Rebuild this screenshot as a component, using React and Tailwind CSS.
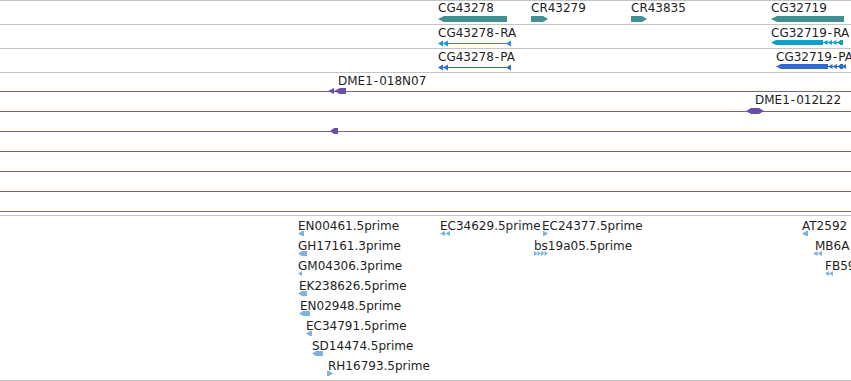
import React from 'react';

const TEAL = '#418f91';
const CYAN = '#129fc1';
const BLUE = '#3468cc';
const PURPLE = '#6b4ea6';
const EST = '#7fb3dd';

// left-pointing block
const leftBlock = (w, h, tip, color) => (
  <polygon points={`0,${h / 2} ${tip},0 ${w},0 ${w},${h} ${tip},${h}`} fill={color} />
);
// right-pointing block
const rightBlock = (w, h, tip, color) => (
  <polygon points={`0,0 ${w - tip},0 ${w},${h / 2} ${w - tip},${h} 0,${h}`} fill={color} />
);
// row of small chevrons
const chevrons = (x0, n, step, h, dir, color) =>
  Array.from({ length: n }).map((_, i) => {
    const x = x0 + i * step;
    const pts =
      dir === 'left'
        ? `${x},${h / 2} ${x + step},0 ${x + step},${h}`
        : `${x},0 ${x + step},${h / 2} ${x},${h}`;
    return <polygon key={i} points={pts} fill={color} />;
  });

// features sit on the browser canvas at their genomic pixel position
const Glyph = ({ x, y, w, h, children }) => (
  <svg
    className="absolute overflow-visible"
    style={{ left: x, top: y }}
    width={w}
    height={h}
    viewBox={`0 0 ${w} ${h}`}
  >
    {children}
  </svg>
);

// names with a dash get a little air round it, like the canvas font
const Label = ({ x, y, children }) => {
  const parts = typeof children === 'string' ? children.split('-') : [children];
  return (
    <div
      className="absolute whitespace-nowrap text-[12px] leading-[14px] text-[#1e1e1e]"
      style={{ left: x, top: y }}
    >
      {parts.map((p, i) => (
        <React.Fragment key={i}>
          {i > 0 && <span className="px-[1px]">-</span>}
          {p}
        </React.Fragment>
      ))}
    </div>
  );
};

const transcript = (w, color) => (
  <g>
    <line x1="4" y1="3.5" x2={w - 2} y2="3.5" stroke={color} strokeWidth="1" />
    <polygon points="0,3.5 5,0.5 5,6.5" fill={color} />
    <polygon points="5,3.5 10,0.5 10,6.5" fill={color} />
    <polygon points={`${w - 5},3.5 ${w},0.5 ${w},6.5`} fill={color} />
  </g>
);

const bigTranscript = (w, color) => (
  <g>
    {leftBlock(52, 5, 5, color)}
    <line x1="50" y1="2.5" x2={w} y2="2.5" stroke={color} strokeWidth="1" />
    {chevrons(52, 4, 4.5, 5, 'left', color)}
    <rect x={w - 3} y="0" width="3" height="5" fill={color} />
  </g>
);

const estRows = [
  { x: 298, row: 0, label: 'EN00461.5prime', gx: 298, gw: 6, kind: 'left' },
  { x: 298, row: 1, label: 'GH17161.3prime', gx: 298, gw: 9, kind: 'left' },
  { x: 298, row: 2, label: 'GM04306.3prime', gx: 298, gw: 4, kind: 'left' },
  { x: 299, row: 3, label: 'EK238626.5prime', gx: 298, gw: 9, kind: 'left' },
  { x: 300, row: 4, label: 'EN02948.5prime', gx: 299, gw: 11, kind: 'left' },
  { x: 306, row: 5, label: 'EC34791.5prime', gx: 306, gw: 6, kind: 'left' },
  { x: 312, row: 6, label: 'SD14474.5prime', gx: 312, gw: 11, kind: 'left' },
  { x: 328, row: 7, label: 'RH16793.5prime', gx: 327, gw: 6, kind: 'right' },
  { x: 440, row: 0, label: 'EC34629.5prime', gx: 440, gw: 10, kind: 'left2' },
  { x: 542, row: 0, label: 'EC24377.5prime', gx: 543, gw: 5, kind: 'right' },
  { x: 534, row: 1, label: 'bs19a05.5prime', gx: 534, gw: 14, kind: 'right3' },
  { x: 802, row: 0, label: 'AT2592', gx: 802, gw: 6, kind: 'left' },
  { x: 815, row: 1, label: 'MB6A', gx: 813, gw: 9, kind: 'left2' },
  { x: 825, row: 2, label: 'FB59', gx: 825, gw: 8, kind: 'left2' },
];

const estShape = (kind, w) => {
  if (kind === 'left') return leftBlock(w, 5, Math.min(4, w), EST);
  if (kind === 'right') return rightBlock(w, 5, Math.min(4, w), EST);
  if (kind === 'left2') return chevrons(0, 2, w / 2, 5, 'left', EST);
  return chevrons(0, 4, w / 4, 5, 'right', EST);
};

export default function App() {
  return (
    <div
      className="relative w-[851px] h-[381px] overflow-hidden bg-white flex flex-col"
      style={{ fontFamily: '"DejaVu Sans", Verdana, sans-serif' }}
    >
      {/* gene track */}
      <div className="relative h-[25px] shrink-0 border-t border-b border-[#c4c4c4]">
        <Label x={438} y={0}>CG43278</Label>
        <Glyph x={438} y={15} w={69} h={6}>{leftBlock(69, 6, 6, TEAL)}</Glyph>
        <Label x={531} y={0}>CR43279</Label>
        <Glyph x={531} y={15} w={17} h={6}>{rightBlock(17, 6, 5, TEAL)}</Glyph>
        <Label x={631} y={0}>CR43835</Label>
        <Glyph x={631} y={15} w={16} h={6}>{rightBlock(16, 6, 5, TEAL)}</Glyph>
        <Label x={771} y={0}>CG32719</Label>
        <Glyph x={771} y={15} w={73} h={6}>{leftBlock(73, 6, 6, TEAL)}</Glyph>
      </div>
      <div className="relative h-[24px] shrink-0 border-b border-[#c4c4c4]">
        <Label x={438} y={1}>CG43278-RA</Label>
        <Glyph x={438} y={15} w={73} h={7}>{transcript(73, CYAN)}</Glyph>
        <Label x={771} y={1}>CG32719-RA</Label>
        <Glyph x={771} y={15} w={72} h={5}>{bigTranscript(72, CYAN)}</Glyph>
      </div>
      <div className="relative h-[24px] shrink-0 border-b border-[#c4c4c4]">
        <Label x={438} y={1}>CG43278-PA</Label>
        <Glyph x={438} y={15} w={73} h={7}>{transcript(73, BLUE)}</Glyph>
        <Label x={776} y={1}>CG32719-PA</Label>
        <Glyph x={776} y={15} w={67} h={5}>{bigTranscript(67, BLUE)}</Glyph>
      </div>

      {/* clone track */}
      <div className="relative h-[19px] shrink-0 border-b border-[#7262a4]">
        <Label x={338} y={1}>DME1-018N07</Label>
        <Glyph x={328} y={15} w={18} h={6}>
          <polygon points="0,3 6,0 6,6" fill={PURPLE} />
          <polygon points="6,3 12,0 18,0 18,6 12,6" fill={PURPLE} />
        </Glyph>
      </div>
      <div className="relative h-[20px] shrink-0 border-b border-[#7262a4]">
        <Label x={755} y={1}>DME1-012L22</Label>
        <Glyph x={746} y={16} w={18} h={6}>
          <polygon points="0,3 5,0 13,0 18,3 13,6 5,6" fill={PURPLE} />
        </Glyph>
      </div>
      <div className="relative h-[20px] shrink-0 border-b border-[#7262a4]">
        <Glyph x={330} y={16} w={8} h={6}>
          <polygon points="0,3 4,0 8,0 8,6 4,6" fill={PURPLE} />
        </Glyph>
      </div>
      <div className="h-[20px] shrink-0 border-b border-[#7262a4]" />
      <div className="h-[20px] shrink-0 border-b border-[#7262a4]" />
      <div className="h-[20px] shrink-0 border-b border-[#7262a4]" />
      <div className="h-[20px] shrink-0 border-b border-[#7262a4]" />
      <div className="h-[4px] shrink-0 border-b border-[#c4c4c4]" />

      {/* EST track */}
      <div className="relative h-[165px] shrink-0 border-b border-[#c4c4c4]">
        {estRows.map((e) => (
          <React.Fragment key={e.label}>
            <Label x={e.x} y={3 + e.row * 20}>{e.label}</Label>
            <Glyph x={e.gx} y={15 + e.row * 20} w={e.gw} h={5}>
              {estShape(e.kind, e.gw)}
            </Glyph>
          </React.Fragment>
        ))}
      </div>
    </div>
  );
}
